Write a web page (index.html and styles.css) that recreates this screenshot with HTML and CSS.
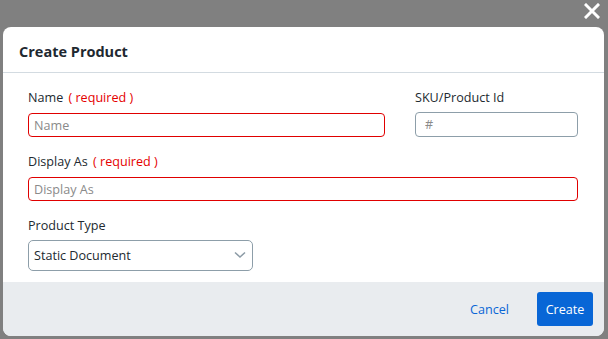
FILE: index.html
```html
<!DOCTYPE html>
<html lang="en">
<head>
    <meta charset="UTF-8">
    <meta name="viewport" content="width=device-width, initial-scale=1.0">
    <title>Create Product</title>
    <link rel="stylesheet" href="styles.css">
</head>
<body>

    <button class="close-button" aria-label="Close">
        <svg width="16" height="16" viewBox="0 0 16 16">
            <path d="M2 2 L14 14 M14 2 L2 14" stroke="#fff" stroke-width="3" stroke-linecap="square"/>
        </svg>
    </button>

    <div class="modal">
        <div class="modal-header">Create Product</div>

        <div class="modal-body">
            <div class="row-top">
                <div class="field">
                    <label>Name <span class="required">( required )</span></label>
                    <input type="text" class="input invalid" placeholder="Name">
                </div>
                <div class="field">
                    <label>SKU/Product Id</label>
                    <input type="text" class="input sku" placeholder="#">
                </div>
            </div>

            <div class="field">
                <label>Display As <span class="required">( required )</span></label>
                <input type="text" class="input invalid" placeholder="Display As">
            </div>

            <div class="field type-field">
                <label>Product Type</label>
                <div class="select">
                    <span>Static Document</span>
                    <svg width="12" height="8" viewBox="0 0 12 8">
                        <path d="M1 1.5 L6 6 L11 1.5" fill="none" stroke="#8c9ba6" stroke-width="1.5"/>
                    </svg>
                </div>
            </div>
        </div>

        <div class="modal-footer">
            <button class="link-button">Cancel</button>
            <button class="primary-button">Create</button>
        </div>
    </div>

</body>
</html>
```

FILE: styles.css
```css
body {
    font-family: 'Open Sans', 'Noto Sans', sans-serif;
    background: #808080;
    margin: 0;
    height: 339px;
    overflow: hidden;
    position: relative;
}

.close-button {
    position: absolute;
    top: 3px;
    right: 8px;
    background: none;
    border: none;
    padding: 0;
    width: 16px;
    height: 16px;
    cursor: pointer;
}

.close-button svg {
    display: block;
}

.modal {
    margin: 27px 4px 0 3px;
    height: 309px;
    background: #ffffff;
    border-radius: 8px;
    overflow: hidden;
    display: flex;
    flex-direction: column;
}

.modal-header {
    height: 46px;
    padding-left: 16px;
    padding-top: 3px;
    box-sizing: border-box;
    display: flex;
    align-items: center;
    font-size: 14.5px;
    font-weight: bold;
    color: #1e2830;
    border-bottom: 1px solid #d3dbe1;
}

.modal-body {
    padding: 16px 26px 11px 25px;
    display: flex;
    flex-direction: column;
    gap: 16px;
}

.row-top {
    display: grid;
    grid-template-columns: 357px 163px;
    gap: 30px;
}

.field {
    display: flex;
    flex-direction: column;
}

.field label {
    font-size: 12.6px;
    line-height: 18px;
    color: #222a30;
    margin-bottom: 6px;
}

.required {
    color: #e50000;
    margin-left: 2px;
}

.input {
    box-sizing: border-box;
    height: 24px;
    border: 1px solid #8d9ea9;
    border-radius: 4px;
    padding: 0 5px;
    font-family: inherit;
    font-size: 12.6px;
    color: #222;
    outline: none;
}

.input::placeholder {
    color: #8a8a8a;
}

.input.invalid {
    border-color: #e00000;
}

.input.sku {
    height: 25px;
    margin-top: -1px;
    padding-left: 9px;
}

.type-field label {
    margin-bottom: 5px;
}

.select {
    box-sizing: border-box;
    width: 225px;
    height: 31px;
    border: 1px solid #8d9ea9;
    border-radius: 5px;
    padding: 0 5px;
    display: flex;
    align-items: center;
    justify-content: space-between;
    font-size: 12.6px;
    color: #222a30;
}

.select svg {
    margin-right: 1px;
    margin-top: -2px;
}

.modal-footer {
    flex: 1;
    background: #e9ecef;
    display: flex;
    align-items: center;
    justify-content: flex-end;
    padding-right: 11px;
    gap: 28px;
}

.link-button {
    background: none;
    border: none;
    padding: 0;
    font-family: inherit;
    font-size: 12.6px;
    color: #0a66d6;
    cursor: pointer;
}

.primary-button {
    width: 56px;
    height: 34px;
    background: #0866d6;
    color: #ffffff;
    border: none;
    border-radius: 3px;
    font-family: inherit;
    font-size: 12.6px;
    cursor: pointer;
}
```
